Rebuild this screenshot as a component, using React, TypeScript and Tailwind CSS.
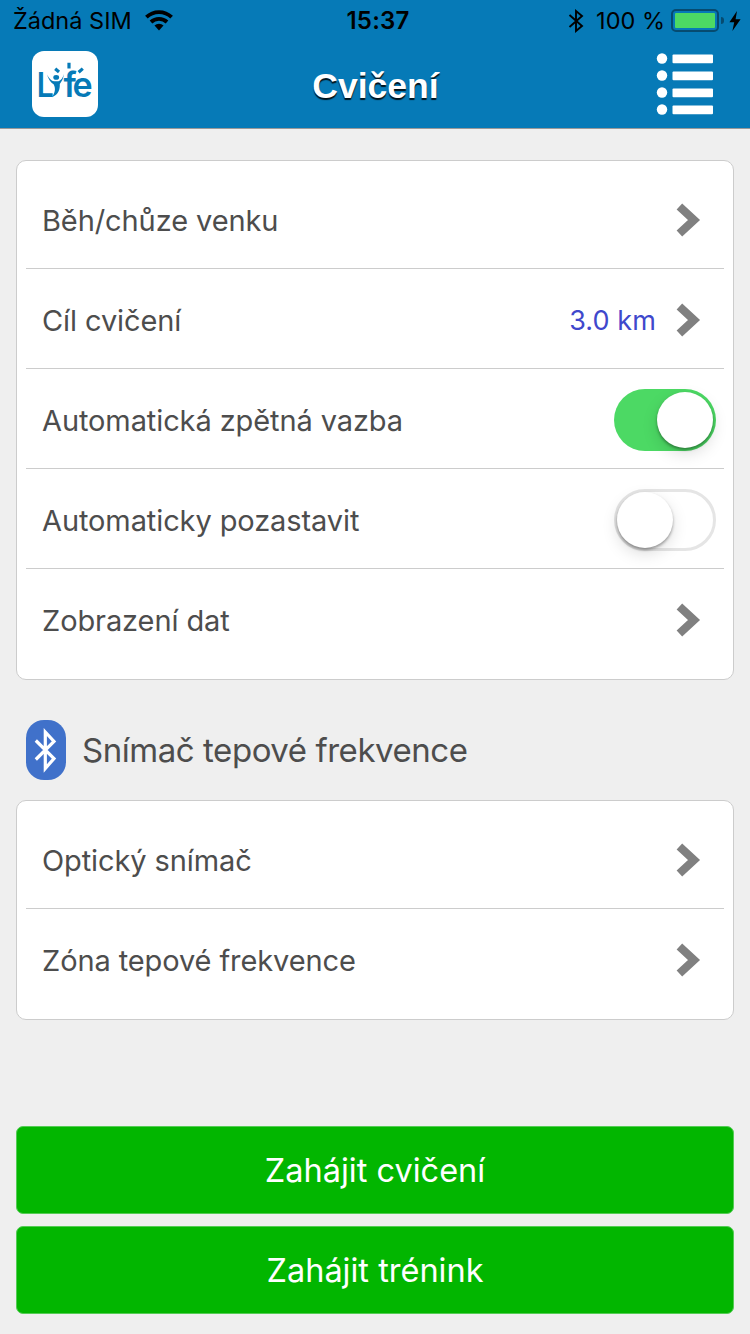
import type { ReactNode } from "react";

function Chevron() {
  return (
    <svg width="26" height="34" viewBox="0 0 26 34" className="shrink-0">
      <path d="M3.4 3.6L18 17L3.4 30.4" fill="none" stroke="#808080" strokeWidth="8.2" />
    </svg>
  );
}

function Switch({ on }: { on?: boolean }) {
  return (
    <div
      className={
        on
          ? "flex h-[62px] w-[102px] items-center justify-end rounded-full bg-[#4cd964] p-[3px]"
          : "flex h-[62px] w-[102px] items-center rounded-full border-[3px] border-[#e5e5e5] bg-white"
      }
    >
      <div className="size-14 rounded-full bg-white shadow-[0_6px_16px_rgba(0,0,0,0.13),0_2px_3px_rgba(0,0,0,0.35)]" />
    </div>
  );
}

function Row({ label, children }: { label: string; children: ReactNode }) {
  return (
    <div className="flex h-[100px] items-center justify-between border-b border-[#ccc] pr-2 pl-4 last:border-transparent">
      <span className="pt-1 text-[29px] tracking-[-0.1px] text-[#4d4d4d]">{label}</span>
      <div className="flex items-center pt-[3px]">{children}</div>
    </div>
  );
}

function LinkRow({ label, value }: { label: string; value?: string }) {
  return (
    <Row label={label}>
      {value && <span className="mr-[20px] pt-[2px] text-[27px] tracking-[0.1px] text-[#3f48cc]">{value}</span>}
      <div className="mr-[14px] flex">
        <Chevron />
      </div>
    </Row>
  );
}

function Card({ children }: { children: ReactNode }) {
  return (
    <section className="mx-4 rounded-[10px] border border-[#ccc] bg-white px-[9px] pt-2 pb-[10px]">
      {children}
    </section>
  );
}

function StatusBar() {
  return (
    <div className="flex h-10 items-center pt-px pr-[9px] pl-[13px] text-[23.5px] text-black">
      <div className="flex flex-1 items-center gap-[13px]">
        <span className="whitespace-nowrap">Žádná SIM</span>
        <svg width="28" height="21" viewBox="0 0 28 21">
          <g fill="none" stroke="#000" strokeWidth="3.8">
            <path d="M1.4 7.2A18.2 18.2 0 0 1 26.6 7.2" />
            <path d="M6 12A11.6 11.6 0 0 1 22 12" />
          </g>
          <path d="M9.5 15.6a6.5 6.5 0 0 1 9 0L14 20.4z" />
        </svg>
      </div>
      <span className="pl-[2px] text-[24px] font-semibold tracking-[0.2px]">15:37</span>
      <div className="flex flex-1 items-center justify-end">
        <svg width="16" height="24" viewBox="0 0 16 24" className="mr-3">
          <path d="M1.5 6L14 17L8 22V2L14 7L1.5 18" fill="none" stroke="#000" strokeWidth="1.9" />
        </svg>
        <span className="mr-[6px] whitespace-nowrap">100 %</span>
        <div className="h-[23px] w-12 rounded-[5px] border-2 border-[#064b70] p-[2px]">
          <div className="h-full rounded-[1px] bg-[#4cd964]" />
        </div>
        <div className="ml-[2px] h-[7px] w-[3px] rounded-r-full bg-[#064b70]" />
        <svg width="12" height="20" viewBox="0 0 12 20" className="ml-[5px]">
          <path d="M8 0L0.4 11.2H5.2L3.4 20L11.6 8.2H6.6z" />
        </svg>
      </div>
    </div>
  );
}

function Logo() {
  return (
    <svg width="66" height="66" viewBox="0 0 66 66">
      <rect width="66" height="66" rx="12" fill="#fff" />
      <g fill="#067ab7" fontFamily="Inter, sans-serif" fontWeight="600" fontSize="34">
        <text x="4.8" y="46" textLength="17" lengthAdjust="spacingAndGlyphs">L</text>
        <text x="31.4" y="46" letterSpacing="-3.2">fe</text>
      </g>
      {/* person standing in for the "y" */}
      <ellipse cx="24.2" cy="26.4" rx="2.9" ry="2.4" fill="#067ab7" />
      <path
        d="M15 23.4C17 27.500 19.500 29.800 22 30.200H26.500C29 29.500 31 26.500 32 23C31.300 28 29.600 30.500 27.800 33C28 38 26.800 43.500 20 46.200C22.800 42 24 38 21.800 33.500C18.500 31.500 16.500 28 15 23.400z"
        fill="#067ab7"
      />
      <path d="M23.200 17.800L27 21M37 11.700V17.600M50.800 17.600L46.600 21.200" stroke="#067ab7" strokeWidth="3.200" />
    </svg>
  );
}

function MenuIcon() {
  return (
    <svg width="58" height="62" viewBox="0 0 58 62" fill="#fff">
      {[5.5, 22.5, 39.5, 56.5].map((y) => (
        <g key={y}>
          <circle cx="6" cy={y} r="5.2" />
          <rect x="16.500" y={y - 4} width="40.500" height="8.800" rx="1" />
        </g>
      ))}
    </svg>
  );
}

function StartButton({ children }: { children: ReactNode }) {
  return (
    <button className="h-[88px] w-full rounded-[7px] border border-[#55cc55] bg-[#02b600] pt-[2px] text-[32.5px] text-white">
      {children}
    </button>
  );
}

export default function App() {
  return (
    <div className="flex h-[1334px] w-[750px] flex-col bg-[#efefef] font-[Inter,sans-serif]">
      <header className="h-[129px] border-b border-[#999] bg-[#067ab7]">
        <StatusBar />
        <div className="flex h-[88px] items-center justify-between pr-9 pl-8">
          <Logo />
          <h1 className="pt-[5px] pr-[3px] font-['Liberation_Sans',sans-serif] text-[35.5px] font-bold text-white [text-shadow:0_2px_1px_rgba(0,0,0,0.85)]">
            Cvičení
          </h1>
          <MenuIcon />
        </div>
      </header>

      <main className="flex flex-1 flex-col pt-[31px]">
        <Card>
          <LinkRow label="Běh/chůze venku" />
          <LinkRow label="Cíl cvičení" value="3.0 km" />
          <Row label="Automatická zpětná vazba">
            <Switch on />
          </Row>
          <Row label="Automaticky pozastavit">
            <Switch />
          </Row>
          <LinkRow label="Zobrazení dat" />
        </Card>

        <div className="flex h-[120px] items-center gap-4 pt-5 pl-[26px]">
          <svg width="40" height="60" viewBox="0 0 40 60">
            <rect width="40" height="60" rx="18" fill="#4071ca" />
            <path d="M9.800 20.500L28 38.500L19.300 48.500V12L28 21.500L9.800 39.500" fill="none" stroke="#fff" strokeWidth="3.200" />
          </svg>
          <h2 className="pt-[2px] text-[33px] tracking-[-0.45px] text-[#4d4d4d]">Snímač tepové frekvence</h2>
        </div>

        <Card>
          <LinkRow label="Optický snímač" />
          <LinkRow label="Zóna tepové frekvence" />
        </Card>

        <div className="mt-auto flex flex-col gap-3 px-4 pb-5">
          <StartButton>Zahájit cvičení</StartButton>
          <StartButton>Zahájit trénink</StartButton>
        </div>
      </main>
    </div>
  );
}
